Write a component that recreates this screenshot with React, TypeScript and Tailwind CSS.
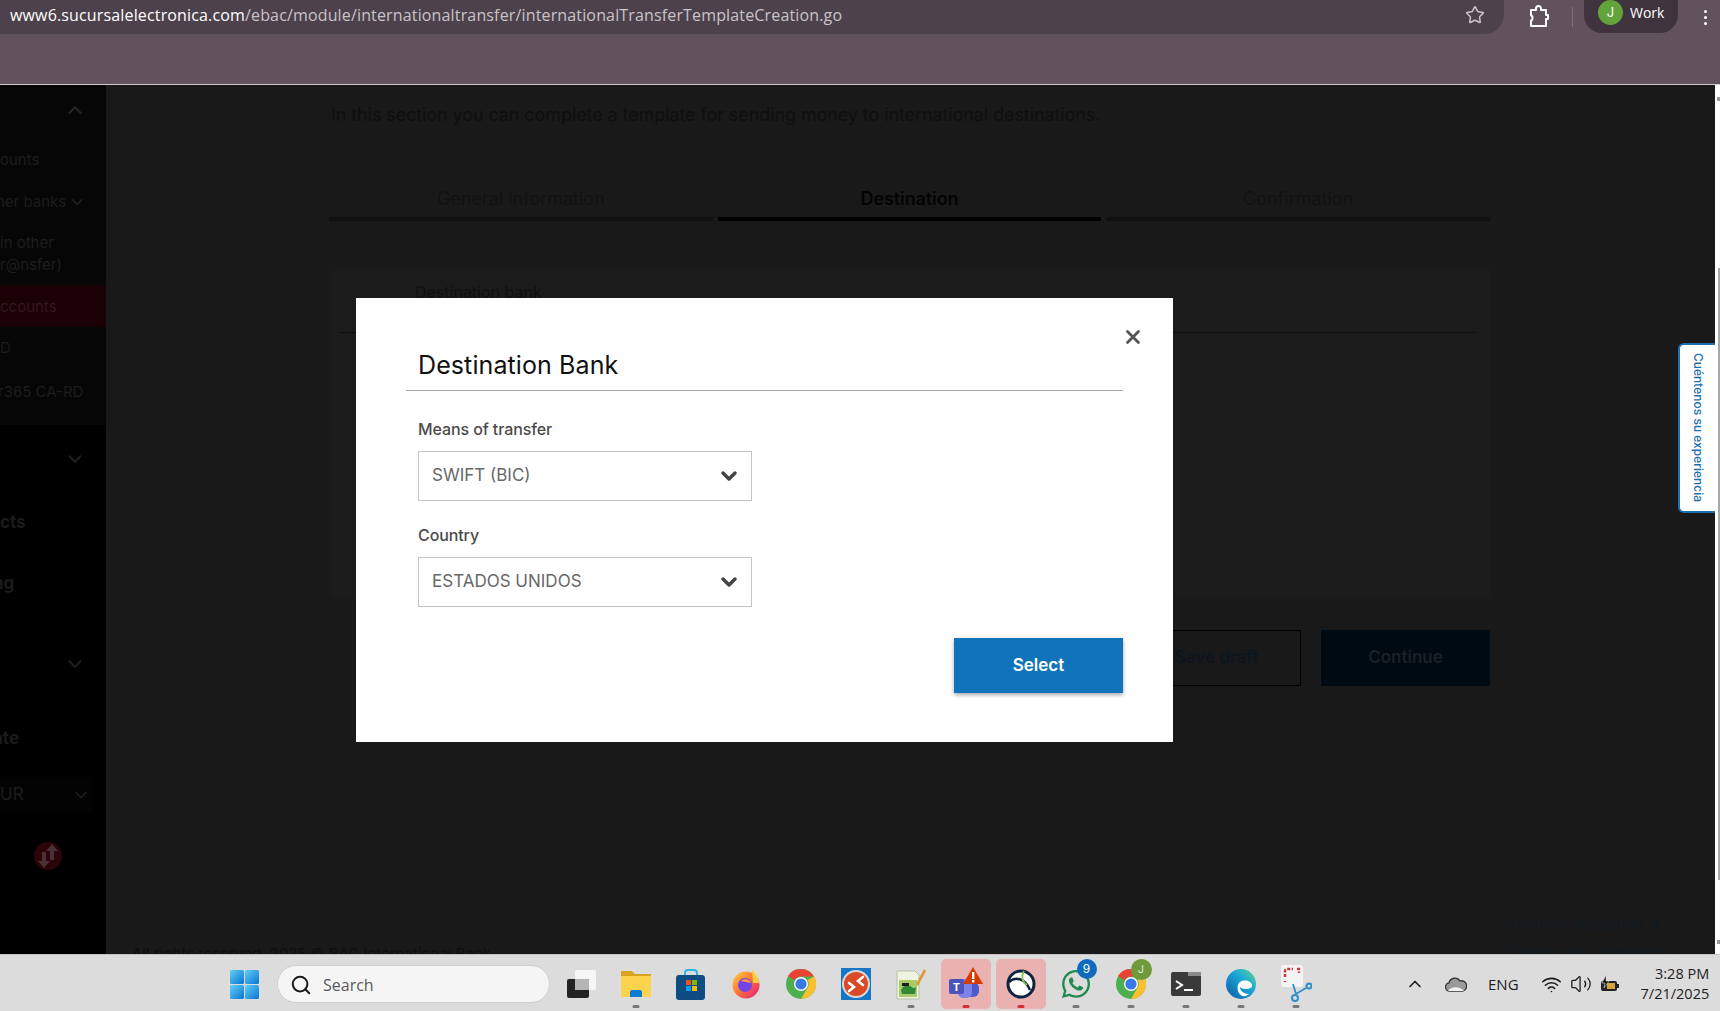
import React from "react";
import { ChevronDown, ChevronUp, ChevronRight, Star, Search, X, Wifi, Volume2 } from "lucide-react";
import { FaWhatsapp } from "react-icons/fa";

const ChromeIcon = ({ size = 30 }: { size?: number }) => (
  <svg width={size} height={size} viewBox="0 0 30 30">
    <circle cx="15" cy="15" r="15" fill="#4caf50" />
    <path d="M15 0a15 15 0 0 1 13 7.5H15a7.5 7.5 0 0 0-6.5 3.8L2 7A15 15 0 0 1 15 0z" fill="#ea4335" />
    <path d="M28 7.5A15 15 0 0 1 15 30l6.5-11.2A7.5 7.5 0 0 0 21.5 11z" fill="#fbc02d" />
    <circle cx="15" cy="15" r="7" fill="#fff" />
    <circle cx="15" cy="15" r="5.6" fill="#3b78e7" />
  </svg>
);

const Dot = ({ red = false }: { red?: boolean }) => (
  <span className={`absolute bottom-[3px] left-1/2 h-[3px] w-[7px] -translate-x-1/2 rounded-full ${red ? "bg-[#d32f2f]" : "bg-[#777777]"}`} />
);

const Slot = ({ children, dot, red, hl }: { children: React.ReactNode; dot?: boolean; red?: boolean; hl?: boolean }) => (
  <div className="relative flex h-full w-[55px] shrink-0 items-center justify-center">
    {hl && <span className="absolute left-[2.5px] top-[2px] h-[50px] w-[50px] rounded-[5px] bg-[#e9b1b0]" />}
    <span className="relative flex">{children}</span>
    {dot && <Dot red={red} />}
  </div>
);

const Tab = ({ label, active }: { label: string; active?: boolean }) => (
  <div className={`flex h-[34px] items-start justify-center border-b-[4px] ${active ? "border-[#000000] font-semibold tracking-[-0.1px] text-[#030303]" : "border-[#111111] text-[#121212]"} text-[18px] leading-[24px]`}>
    {label}
  </div>
);

const Field = ({ label, value }: { label: string; value: string }) => (
  <div className="flex flex-col">
    <label className="text-[16px] font-medium leading-[20px] tracking-[-0.1px] text-[#4b4b4b]">{label}</label>
    <div className="mt-[12px] flex h-[50px] w-[334px] items-center justify-between border border-[#c4c4c4] pl-[13px] pr-[10px] text-[17px] text-[#686868]">
      <span>{value}</span>
      <ChevronDown size={24} strokeWidth={3.5} color="#444444" />
    </div>
  </div>
);

export default function App() {
  return (
    <div className="relative flex h-[1011px] w-[1720px] flex-col overflow-hidden bg-[#191919] font-['Inter',sans-serif]">
      {/* browser chrome */}
      <header className="h-[85px] shrink-0 border-b border-[#cfc9cd] bg-[#62525d]">
        <div className="flex h-[34px] items-center">
          <div className="flex h-full w-[1504px] items-center justify-between rounded-br-[20px] bg-[#4d414b] pb-[5px] pl-[10px] pr-[19px] font-['Open_Sans',sans-serif] text-[16px] tracking-[0.15px]">
            <span className="text-[#c9c4c8]"><span className="text-white">www6.sucursalelectronica.com</span>/ebac/module/internationaltransfer/internationalTransferTemplateCreation.go</span>
            <Star size={20} color="#c9c4c8" strokeWidth={1.8} />
          </div>
          <svg className="ml-[24px]" width="22" height="24" viewBox="0 0 22 24" fill="none" stroke="#fff" strokeWidth="2" strokeLinejoin="round">
            <path d="M3 5h5V3.5a2.5 2.5 0 0 1 5 0V5h5v5h2v4h-2v7H3v-5.5c2-.2 2-4.800 0-5z" />
          </svg>
          <span className="ml-[22px] h-[20px] w-px bg-[#7e6f79]" />
          <div className="ml-[11px] flex h-[33px] w-[94px] items-start self-start rounded-b-[18px] bg-[#3f343d] pl-[14px]">
            <span className="flex h-[25px] w-[25px] items-center justify-center rounded-full bg-[#62a33b] text-[13px] text-white">J</span>
            <span className="ml-[7px] font-['Open_Sans',sans-serif] text-[14px] leading-[26px] text-white">Work</span>
          </div>
          <div className="ml-[26px] flex flex-col gap-[3px]">
            <span className="h-[3px] w-[3px] rounded-full bg-white" />
            <span className="h-[3px] w-[3px] rounded-full bg-white" />
            <span className="h-[3px] w-[3px] rounded-full bg-white" />
          </div>
        </div>
      </header>

      {/* dimmed page */}
      <div className="flex min-h-0 flex-1">
        <aside className="flex w-[106px] shrink-0 flex-col overflow-hidden bg-[#000000] text-[15px] text-[#1d1d1d]">
          <div className="flex h-[340px] shrink-0 flex-col bg-[#060606]">
            <div className="flex h-[50px] items-center justify-end pr-[20px]"><ChevronUp size={22} strokeWidth={2.5} color="#242424" /></div>
            <div className="mt-[4px] flex h-[42px] items-center pt-[1px]">ounts</div>
            <div className="flex h-[42px] items-center -ml-[4px]">her banks<ChevronDown size={18} color="#222222" className="ml-[2px]" /></div>
            <div className="flex h-[62px] flex-col justify-center leading-[22px]"><span>in other</span><span>r@nsfer)</span></div>
            <div className="flex h-[42px] items-center bg-[#190105] pt-[3px] text-[#331a1e]">ccounts</div>
            <div className="flex h-[42px] items-center pt-[1px]">D</div>
            <div className="flex h-[46px] items-center -ml-[2px]">r365 CA-RD</div>
          </div>
          <div className="flex h-[68px] shrink-0 items-center justify-end pr-[20px]"><ChevronDown size={22} color="#1f1f1f" /></div>
          <div className="flex h-[60px] shrink-0 items-center text-[17px] font-bold text-[#1b1b1b]">cts</div>
          <div className="-ml-[7px] flex h-[62px] shrink-0 items-center text-[17px] font-bold text-[#1b1b1b]">ng</div>
          <div className="flex h-[98px] shrink-0 items-center justify-end pr-[20px]"><ChevronDown size={22} color="#1f1f1f" /></div>
          <div className="-ml-[7px] mt-[1px] flex h-[50px] shrink-0 items-center text-[17px] font-bold text-[#1b1b1b]">ate</div>
          <div className="mt-[13px] flex h-[36px] w-[92px] shrink-0 items-center justify-between bg-[#030303] pr-[1px] text-[17px]">UR<ChevronDown size={20} color="#1f1f1f" /></div>
          <div className="mt-[29px] flex justify-start pl-[34px]">
            <svg width="28" height="28" viewBox="0 0 28 28">
              <circle cx="14" cy="14" r="14" fill="#2b0508" />
              <path d="M18 2l6 7h-4v9h-4V9h-4zM10 26l-6-7h4v-9h4v9h4z" fill="#4a3034" />
            </svg>
          </div>
        </aside>

        <main className="flex min-w-0 flex-1 flex-col overflow-hidden pl-[225px] pr-[225px]">
          <p className="mt-[18px] whitespace-nowrap text-[18px] leading-[24px] tracking-[-0.09px] text-[#0f0f0f]">In this section you can complete a template for sending money to international destinations.</p>
          <div className="-ml-[2px] mt-[60px] grid grid-cols-3 gap-[5px]">
            <Tab label="General information" />
            <Tab label="Destination" active />
            <Tab label="Confirmation" />
          </div>
          <section className="mt-[49px] h-[327px] shrink-0 bg-[#1b1b1b] pl-[9px] pr-[15px]">
            <div className="h-[63px] border-b border-[#0d0d0d] pl-[75px] pt-[12px] text-[16px] leading-[20px] text-[#101010]">Destination bank</div>
          </section>
          <div className="mt-[33px] flex justify-end gap-[20px]">
            <div className="flex h-[56px] w-[169px] items-center justify-center border border-[#000000] text-[17px] font-semibold text-[#0b1620]">Save draft</div>
            <div className="flex h-[56px] w-[169px] items-center justify-center bg-[#000a12] text-[17px] font-semibold text-[#1a2127]">Continue</div>
          </div>
          <footer className="-ml-[199px] -mr-[195px] mt-[227px] flex justify-between text-[15px] leading-[22px] text-[#0e0e0e]">
            <span className="mt-[30px]">All rights reserved. 2025 © BAC International Bank</span>
            <div className="flex flex-col items-start text-[#0f1a22]">
              <span className="flex items-center">Cambiar a Español<ChevronRight size={16} strokeWidth={3} className="ml-[6px]" /></span>
              <span className="mt-[8px] flex items-center">Terms and conditions<ChevronRight size={16} strokeWidth={3} className="ml-[6px]" /></span>
            </div>
          </footer>
        </main>

        <div className="relative w-[5px] shrink-0 bg-white">
          <span className="absolute right-0 top-[183px] h-[612px] w-[2px] bg-[#a8a8a8]" />
          <span className="absolute right-0 top-[12px] h-[4px] w-[3px] bg-[#9a9a9a]" />
          <span className="absolute bottom-[10px] right-0 h-[4px] w-[3px] bg-[#9a9a9a]" />
        </div>
      </div>

      {/* taskbar */}
      <footer className="flex h-[57px] shrink-0 items-center border-t border-[#c4c4c4] bg-[#dcdcdc] pl-[230px] pt-[2px]">
        <svg width="29" height="29" viewBox="0 0 29 29" className="shrink-0">
          <defs>
            <linearGradient id="win" x1="0" y1="0" x2="1" y2="1"><stop offset="0" stopColor="#5fd0f5" /><stop offset="1" stopColor="#0b74d6" /></linearGradient>
          </defs>
          <rect width="14" height="14" rx="1.5" fill="url(#win)" /><rect x="15" width="14" height="14" rx="1.5" fill="url(#win)" />
          <rect y="15" width="14" height="14" rx="1.5" fill="url(#win)" /><rect x="15" y="15" width="14" height="14" rx="1.5" fill="url(#win)" />
        </svg>
        <div className="ml-[18px] flex h-[38px] w-[273px] shrink-0 items-center rounded-full border border-[#cfcfcf] bg-[#f5f5f5] pl-[12px] pt-[1px] font-['Open_Sans',sans-serif] text-[16px] text-[#5a5a5a]">
          <Search size={22} color="#1a1a1a" strokeWidth={2.2} />
          <span className="ml-[11px]">Search</span>
        </div>
        <div className="ml-[3px] flex h-full">
          <Slot>
            <svg width="30" height="30" viewBox="0 0 30 30"><rect x="1" y="10" width="22" height="19" rx="2" fill="#222222" /><rect x="9" y="1" width="21" height="20" rx="2" fill="#f6f6f6" /><rect x="9" y="10" width="14" height="11" fill="#b5b5b5" /></svg>
          </Slot>
          <Slot dot>
            <svg width="30" height="30" viewBox="0 0 30 30"><path d="M0 3a1 1 0 0 1 1-1h10l3 3h15a1 1 0 0 1 1 1v2H0z" fill="#d9a21f" /><rect y="7" width="30" height="21" rx="1" fill="#fcd34d" /><path d="M9 28v-5a2 2 0 0 1 2-2h8a2 2 0 0 1 2 2v5z" fill="#0c7cd5" /></svg>
          </Slot>
          <Slot>
            <svg width="30" height="31" viewBox="0 0 30 31"><path d="M9 8V4a3 3 0 0 1 3-3h6a3 3 0 0 1 3 3v4" fill="none" stroke="#2fb4e8" strokeWidth="2" /><rect y="6" width="29" height="25" rx="3" fill="#0f4c81" /><rect x="10" y="11" width="5" height="5" fill="#f25022" /><rect x="16" y="11" width="5" height="5" fill="#7fba00" /><rect x="10" y="17" width="5" height="5" fill="#00a4ef" /><rect x="16" y="17" width="5" height="5" fill="#ffb900" /></svg>
          </Slot>
          <Slot>
            <svg width="28" height="30" viewBox="0 0 28 30"><defs><linearGradient id="ff" x1="0" y1="0" x2="1" y2="1"><stop offset="0" stopColor="#ffd43b" /><stop offset=".5" stopColor="#ff7139" /><stop offset="1" stopColor="#e31587" /></linearGradient></defs><circle cx="14" cy="16" r="13.5" fill="url(#ff)" /><path d="M20 0c4 5 7 9 7 14h-6z" fill="#ffcf3b" /><circle cx="13" cy="16" r="7" fill="#7542e5" /><path d="M9 12c3-3 9-2 10 2-3-1-7-1-10-2z" fill="#ff9a3b" /></svg>
          </Slot>
          <Slot><ChromeIcon /></Slot>
          <Slot>
            <svg width="30" height="32" viewBox="0 0 30 32"><rect width="30" height="32" fill="#1877c5" /><circle cx="15" cy="16" r="14" fill="#d9d9d9" /><circle cx="15" cy="16" r="12" fill="#db4a26" /><path d="M8 15l5 4-5 4M22 9l-5 4 5 4" fill="none" stroke="#fff" strokeWidth="2.6" strokeLinecap="round" /></svg>
          </Slot>
          <Slot dot>
            <svg width="30" height="32" viewBox="0 0 30 32"><path d="M1 3h18l4 4v24H1z" fill="#eef3e2" stroke="#b9c0a8" /><path d="M3 12h18v17H3z" fill="#a8cc6a" /><path d="M5 22c3-5 6-6 9-4s4 3 6 1l-1 7H6z" fill="#2f8a33" /><rect x="6" y="15" width="7" height="3" fill="#1f1f1f" /><path d="M28 1L20 16l2 2L30 3z" fill="#d99a3c" /></svg>
          </Slot>
          <Slot dot red hl>
            <svg width="36" height="34" viewBox="0 0 36 34"><circle cx="24" cy="15" r="5" fill="#6a6fd0" /><rect x="16" y="15" width="15" height="15" rx="6" fill="#5059c9" /><rect x="10" y="12" width="14" height="19" rx="5" fill="#7b83eb" /><rect x="1" y="12" width="15" height="15" rx="2" fill="#4b53bc" /><text x="8.500" y="24" textAnchor="middle" fontSize="11" fontWeight="700" fill="#fff" fontFamily="Inter, sans-serif">T</text><path d="M25 0l10 17H15z" fill="#d83b01" /><rect x="24" y="5" width="2.400" height="7" fill="#fff" /><rect x="24" y="13" width="2.400" height="2.400" fill="#fff" /></svg>
          </Slot>
          <Slot dot red hl>
            <svg width="30" height="30" viewBox="0 0 30 30" fill="none"><circle cx="15" cy="15" r="13" fill="#ffffff" stroke="#0d2340" strokeWidth="3" /><path d="M3 13c6-6 16-4 21 8" stroke="#0d2340" strokeWidth="2.500" /><path d="M18 2c-3 5-2 11 3 14" stroke="#8cc152" strokeWidth="1.800" /></svg>
          </Slot>
          <Slot dot>
            <span className="relative flex">
              <FaWhatsapp size={32} color="#1f8a4c" />
              <span className="absolute -right-[5px] -top-[9px] flex h-[20px] w-[20px] items-center justify-center rounded-full bg-[#0f6cbd] text-[12px] text-white">9</span>
            </span>
          </Slot>
          <Slot dot>
            <span className="relative flex">
              <ChromeIcon />
              <span className="absolute -right-[6px] -top-[10px] flex h-[21px] w-[21px] items-center justify-center rounded-full bg-[#6f9a3c] text-[11px] text-[#dfe8d0]">J</span>
            </span>
          </Slot>
          <Slot dot>
            <svg width="30" height="24" viewBox="0 0 30 24"><rect width="30" height="24" rx="2" fill="#3a3a3a" /><path d="M17 0h11a2 2 0 0 1 2 2v2H17z" fill="#8a8a8a" /><path d="M5 9l6 4-6 4" fill="none" stroke="#fff" strokeWidth="2" /><rect x="13" y="17" width="9" height="2" fill="#fff" /></svg>
          </Slot>
          <Slot dot>
            <svg width="30" height="30" viewBox="0 0 30 30"><defs><linearGradient id="edge" x1="0" y1="1" x2="1" y2="0"><stop offset="0" stopColor="#0c59a4" /><stop offset=".6" stopColor="#1ba8d8" /><stop offset="1" stopColor="#5fdc8f" /></linearGradient></defs><circle cx="15" cy="15" r="15" fill="url(#edge)" /><path d="M14 13c5-3 11-1 12 3 .5 2-2 4-6 4-3 0-5-1-6-2 0 4 4 7 9 7-3 3-8 3-10-1-2-3-2-9 1-11z" fill="#ffffff" /></svg>
          </Slot>
          <Slot dot>
            <svg width="32" height="40" viewBox="0 0 32 40" fill="none"><rect x="1" y="1" width="22" height="22" rx="3" fill="#f4f4f4" /><path d="M5 13V7a2 2 0 0 1 2-2h6M17 5h2v4M5 17v1" stroke="#c83a3a" strokeWidth="2.500" strokeDasharray="3 1.500" /><path d="M13 20l3 10 10-6" stroke="#2d8ecb" strokeWidth="1.800" /><circle cx="15" cy="34" r="3" stroke="#2d8ecb" strokeWidth="2" /><circle cx="29" cy="22" r="2.500" stroke="#2d8ecb" strokeWidth="2" /></svg>
          </Slot>
        </div>
        <div className="ml-[82px] flex items-center font-['Open_Sans',sans-serif] text-[#1c1c1c]">
          <ChevronUp size={20} strokeWidth={2} />
          <svg className="ml-[20px]" width="22" height="16" viewBox="0 0 22 16"><path d="M5 15a4 4 0 0 1-1-8 6 6 0 0 1 11-2 5 5 0 0 1 3 10z" fill="#9a9a9a" stroke="#333333" strokeWidth="1.300" /><path d="M3 15c3-5 12-5 16 0z" fill="#f0f0f0" /></svg>
          <span className="ml-[21px] text-[15px]">ENG</span>
          <Wifi className="ml-[22px]" size={21} strokeWidth={1.8} />
          <Volume2 className="ml-[8px]" size={22} strokeWidth={1.4} />
          <svg className="ml-[8px]" width="20" height="18" viewBox="0 0 20 18"><rect x="1" y="6" width="16" height="10" rx="2" fill="#222222" /><rect x="17" y="9" width="2" height="4" fill="#222222" /><rect x="7" y="8" width="8" height="6" fill="#d6a23a" /><path d="M6 0L2 8h3l-1 5 5-7H6z" fill="#111111" stroke="#dcdcdc" strokeWidth=".6" /></svg>
          <div className="ml-[21px] flex flex-col items-end text-[14.5px] leading-[20px]">
            <span>3:28 PM</span>
            <span>7/21/2025</span>
          </div>
        </div>
      </footer>

      {/* feedback tab */}
      <button className="absolute right-[5px] top-[343px] flex h-[170px] w-[37px] items-center justify-center rounded-l-[6px] border-2 border-r-0 border-[#1a6fb0] bg-white text-[12px] font-medium text-[#1a6fb0] [writing-mode:vertical-rl]">
        Cuéntenos su experiencia
      </button>

      {/* modal */}
      <div className="absolute left-[356px] top-[298px] flex h-[444px] w-[817px] flex-col bg-white px-[50px]">
        <button className="absolute right-[29px] top-[28px]" aria-label="Close"><X size={22} strokeWidth={3} color="#555555" /></button>
        <h2 className="mt-[50px] h-[43px] border-b border-[#a8a8a8] pl-[12px] text-[25px] font-normal leading-[34px] tracking-[0.1px] text-[#111111]">Destination Bank</h2>
        <div className="mt-[28px] flex flex-col gap-[24px] pl-[12px]">
          <Field label="Means of transfer" value="SWIFT (BIC)" />
          <Field label="Country" value="ESTADOS UNIDOS" />
        </div>
        <div className="mt-[31px] flex justify-end">
          <button className="flex h-[55px] w-[169px] items-center justify-center bg-[#1174bb] text-[17px] font-semibold text-white shadow-[0_2px_4px_rgba(0,0,0,0.35)]">Select</button>
        </div>
      </div>
    </div>
  );
}
